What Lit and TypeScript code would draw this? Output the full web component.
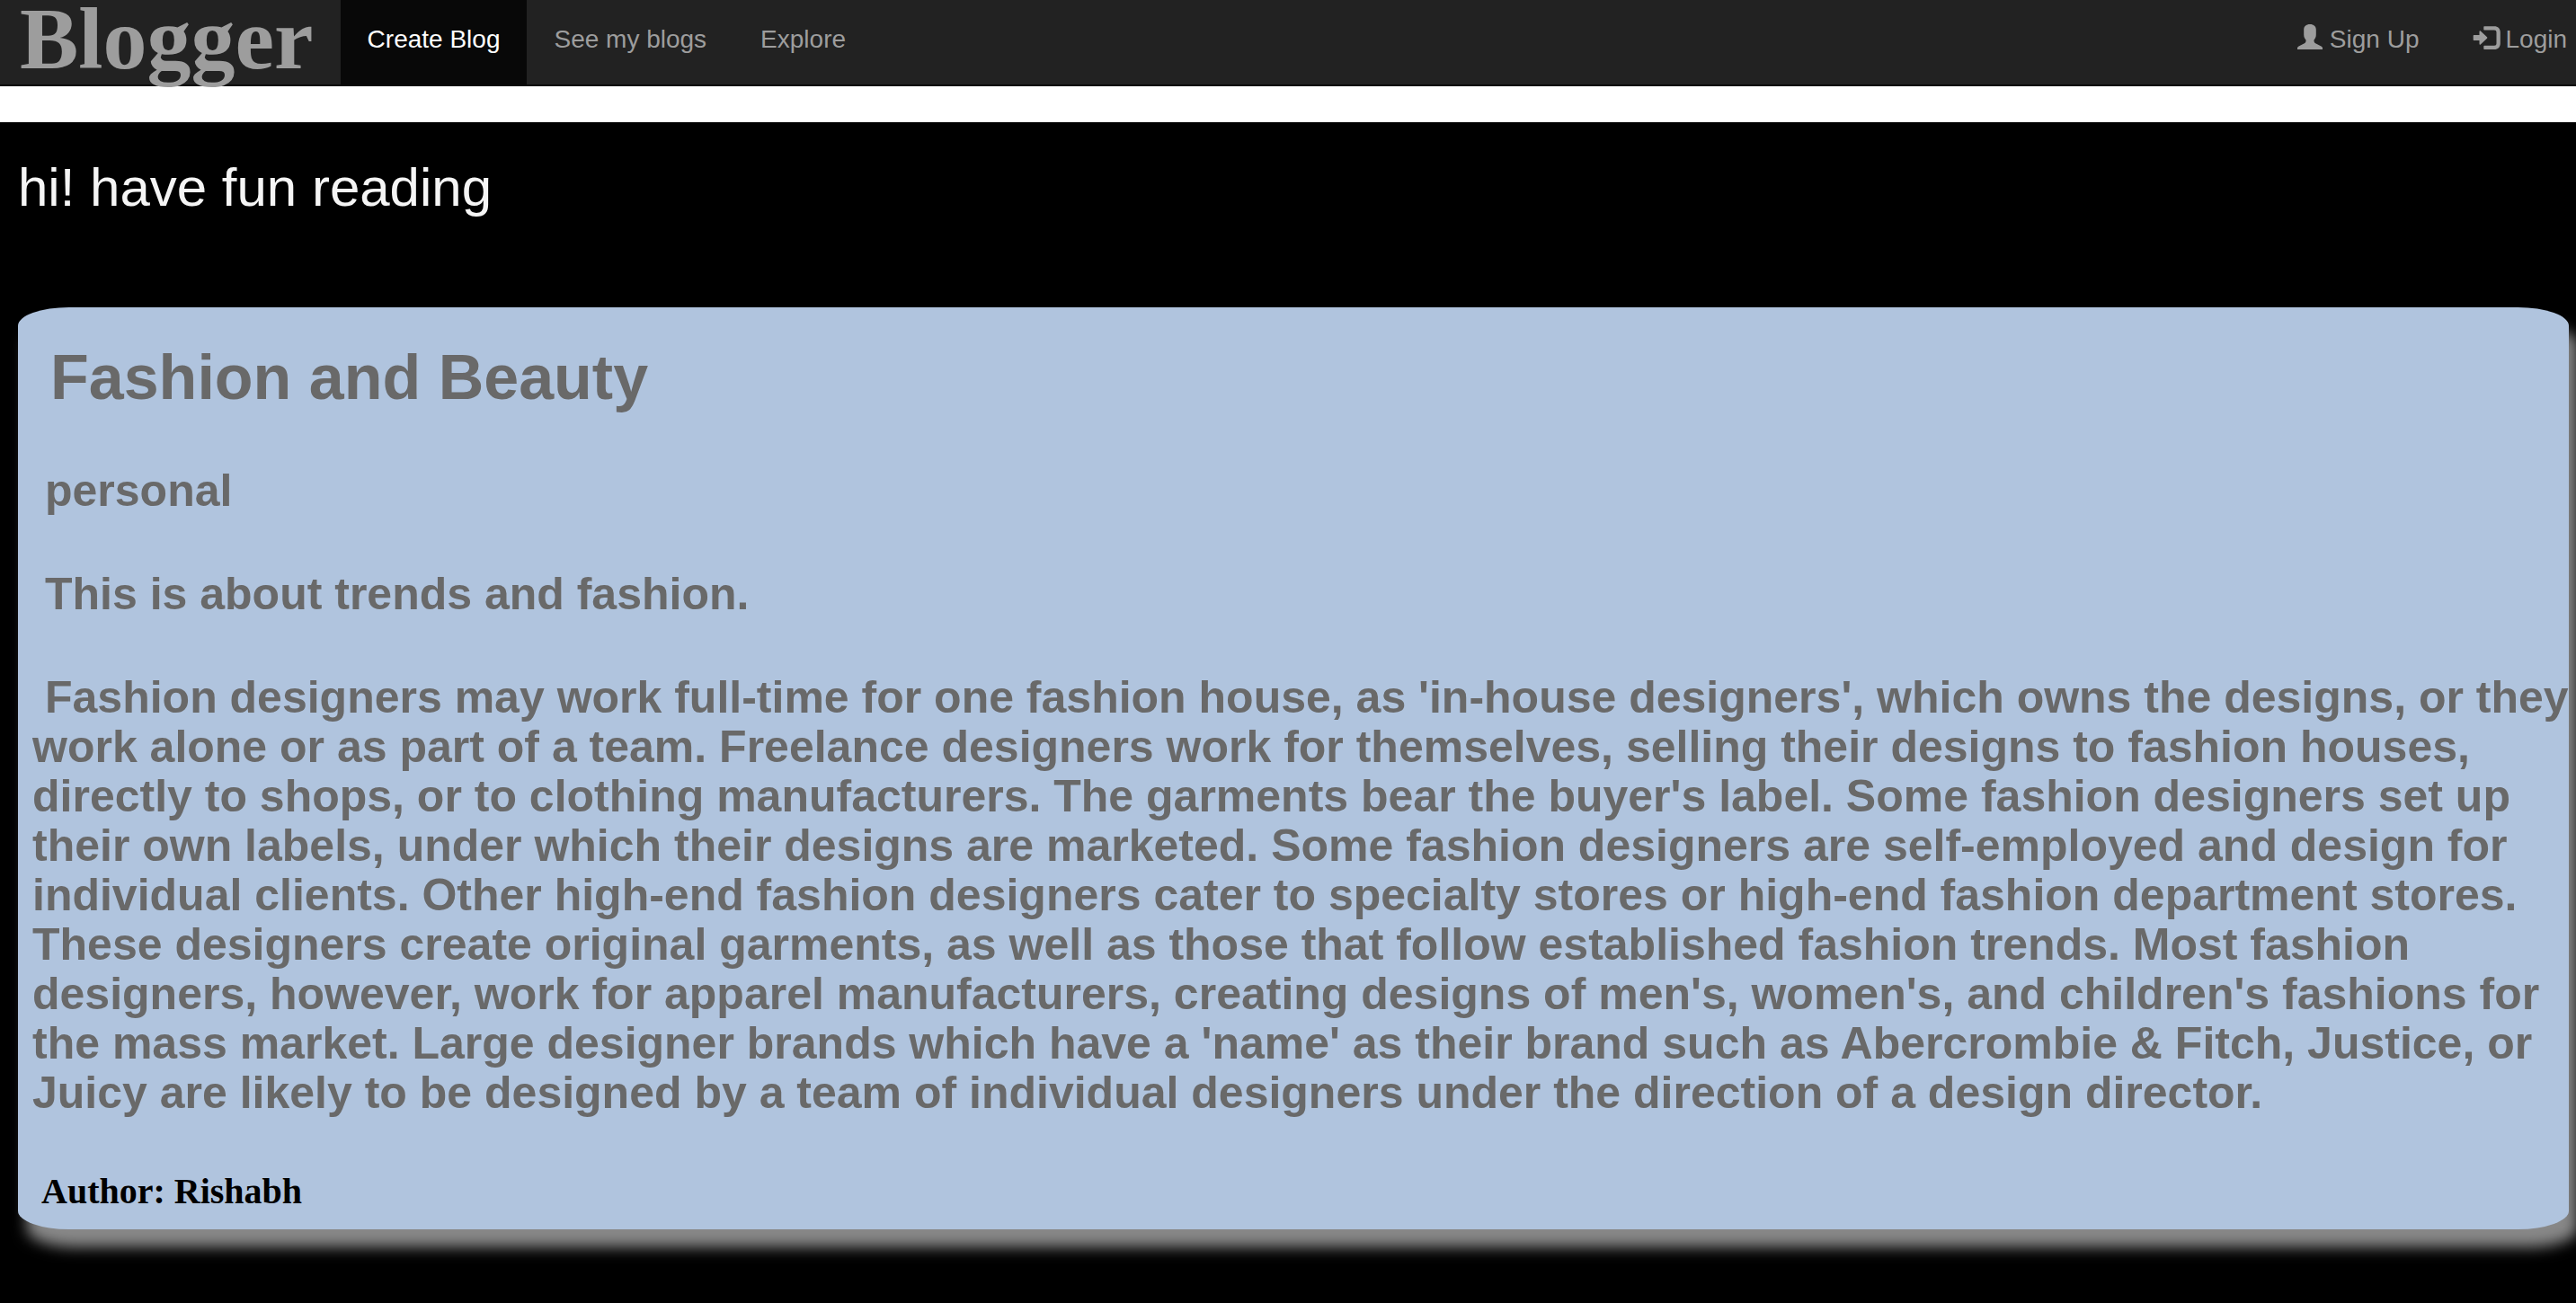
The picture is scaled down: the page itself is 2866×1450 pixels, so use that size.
import { LitElement, html, css, svg } from "lit";
import { customElement, state } from "lit/decorators.js";

interface Post {
  title: string;
  category: string;
  summary: string;
  body: string;
  author: string;
}

const userIcon = svg`<path d="M14 0C9.700 0 7.200 2.500 7.200 6v5.500c0 2.800 1 4.500 2.300 6v1c0 1.200-.500 2-1.700 2.700L1.500 24.400C.500 25 0 25.800 0 26.500V28h28v-1.500c0-.700-.500-1.500-1.500-2.100L20.200 21.200c-1.200-.700-1.700-1.500-1.700-2.700v-1c1.300-1.500 2.300-3.200 2.300-6V6c0-3.500-2.500-6-6.800-6z"/>`;
const loginIcon = svg`<path d="M1.700 12H7.500V8.200c0-1 .700-1.200 1.300-.600l7.200 6.600c.500.500.500 1.100 0 1.600l-7.200 6.600c-.600.600-1.300.400-1.300-.600V18H1.700c-.700 0-1-.300-1-1v-4c0-.700.300-1 1-1z"/><path d="M13.300 2.300H24c4.200 0 6.800 2.600 6.800 6.700v12.200c0 4.200-2.600 6.800-6.800 6.800H13.300c-.700 0-1-.300-1-1v-2.300c0-.700.300-1 1-1H24c1.700 0 2.500-.800 2.500-2.500V9c0-1.700-.800-2.500-2.500-2.500H13.300c-.700 0-1-.300-1-1V3.300c0-.700.300-1 1-1z"/>`;

@customElement("blog-nav")
export class BlogNav extends LitElement {
  static styles = css`
    :host {
      display: block;
    }
    .bar {
      display: flex;
      height: 94px;
      background: #222;
      border-bottom: 2px solid #080808;
      font: 28px/40px "Liberation Sans", Arial, sans-serif;
    }
    .brand {
      padding: 0 30px 0 22px;
      color: #9d9d9d;
      font: bold 98px/86px "Liberation Serif", "Times New Roman", serif;
      text-decoration: none;
    }
    .links {
      display: flex;
      margin: 0;
      padding: 0;
      list-style: none;
    }
    .account {
      margin-left: auto;
    }
    .link {
      display: flex;
      gap: 8px;
      height: 40px;
      padding: 24px 30px 30px;
      color: #9d9d9d;
      text-decoration: none;
      white-space: nowrap;
    }
    .link.active {
      color: #fff;
      background: #080808;
    }
    .account li:last-child .link {
      padding-right: 10px;
    }
    .icon {
      width: 28px;
      height: 28px;
      margin-top: 3px;
      overflow: visible;
      fill: currentColor;
    }
  `;

  render() {
    return html`
      <nav class="bar">
        <a class="brand" href="#">Blogger</a>
        <ul class="links">
          <li><a class="link active" href="#create">Create Blog</a></li>
          <li><a class="link" href="#mine">See my blogs</a></li>
          <li><a class="link" href="#explore">Explore</a></li>
        </ul>
        <ul class="links account">
          <li>
            <a class="link" href="#signup"
              ><svg class="icon" viewBox="0 0 28 28" aria-hidden="true">${userIcon}</svg>Sign Up</a>
          </li>
          <li>
            <a class="link" href="#login"
              ><svg class="icon" viewBox="0 0 28 28" aria-hidden="true">${loginIcon}</svg>Login</a>
          </li>
        </ul>
      </nav>
    `;
  }
}

@customElement("app-root")
export class AppRoot extends LitElement {
  static styles = css`
    :host {
      display: flex;
      flex-direction: column;
      min-height: 100vh;
      background: #fff;
      font-family: "Liberation Sans", Arial, sans-serif;
    }
    .page {
      flex: 1;
      margin-top: 40px;
      padding: 40px 8px 80px 20px;
      background: #000;
      overflow: hidden;
    }
    .greeting {
      margin: 0 0 100px;
      color: #f5f5f5;
      font-size: 60px;
      font-weight: normal;
      line-height: 66px;
    }
    .card {
      padding: 40px 0 20px 16px;
      border-radius: 2%;
      background: #b0c4de;
      box-shadow: 10px 20px 16px #888;
    }
    .title,
    .text {
      margin: 0;
      color: #696969;
      font-weight: bold;
    }
    .title {
      font-size: 70px;
      line-height: 77px;
      text-indent: 20px;
    }
    .text {
      margin-top: 60px;
      font-size: 50px;
      line-height: 55px;
      text-indent: 14px;
    }
    .author {
      margin: 60px 0 0;
      color: #000;
      font: bold 40px/44px "Liberation Serif", "Times New Roman", serif;
      text-indent: 10px;
    }
  `;

  @state() private posts: Post[] = [
    {
      title: "Fashion and Beauty",
      category: "personal",
      summary: "This is about trends and fashion.",
      body: "Fashion designers may work full-time for one fashion house, as 'in-house designers', which owns the designs, or they work alone or as part of a team. Freelance designers work for themselves, selling their designs to fashion houses, directly to shops, or to clothing manufacturers. The garments bear the buyer's label. Some fashion designers set up their own labels, under which their designs are marketed. Some fashion designers are self-employed and design for individual clients. Other high-end fashion designers cater to specialty stores or high-end fashion department stores. These designers create original garments, as well as those that follow established fashion trends. Most fashion designers, however, work for apparel manufacturers, creating designs of men's, women's, and children's fashions for the mass market. Large designer brands which have a 'name' as their brand such as Abercrombie & Fitch, Justice, or Juicy are likely to be designed by a team of individual designers under the direction of a design director.",
      author: "Rishabh",
    },
  ];

  render() {
    return html`
      <blog-nav></blog-nav>
      <main class="page">
        <h1 class="greeting">hi! have fun reading</h1>
        ${this.posts.map(
          (post) => html`
            <article class="card">
              <h2 class="title">${post.title}</h2>
              <p class="text">${post.category}</p>
              <p class="text">${post.summary}</p>
              <p class="text">${post.body}</p>
              <p class="author">Author: ${post.author}</p>
            </article>
          `
        )}
      </main>
    `;
  }
}
